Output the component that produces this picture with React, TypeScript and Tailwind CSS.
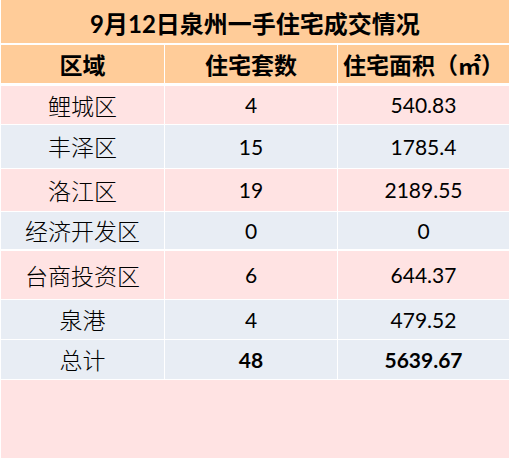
import React from "react";

const PINK = "bg-[#ffe3e3]";
const BLUE = "bg-[#e8edf4]";

type Row = { name: string; count: string; area: string; bg: string; h: string; mt: string; total?: boolean };

const rows: Row[] = [
  { name: "鲤城区", count: "4", area: "540.83", bg: PINK, h: "h-[38px]", mt: "mt-[3px]" },
  { name: "丰泽区", count: "15", area: "1785.4", bg: BLUE, h: "h-[43px]", mt: "mt-px" },
  { name: "洛江区", count: "19", area: "2189.55", bg: PINK, h: "h-[42px]", mt: "mt-px" },
  { name: "经济开发区", count: "0", area: "0", bg: BLUE, h: "h-[37px]", mt: "mt-px" },
  { name: "台商投资区", count: "6", area: "644.37", bg: PINK, h: "h-[48px]", mt: "mt-[2px]" },
  { name: "泉港", count: "4", area: "479.52", bg: BLUE, h: "h-[39px]", mt: "mt-px" },
  { name: "总计", count: "48", area: "5639.67", bg: BLUE, h: "h-[39px]", mt: "mt-px", total: true },
];

const cjk = "font-['Noto_Sans_CJK_SC',sans-serif]";
const num = "font-['Lato','Noto_Sans_CJK_SC',sans-serif]";

export default function App() {
  return (
    <div className="w-[514px] h-[461px] bg-white">
      <div className="ml-px w-[508px] flex flex-col text-black">
        <div className="h-[43px] bg-[#ffcc99] flex items-center justify-center pt-[5px]">
          <span className={`text-[24px] font-bold leading-none ${num}`}>9月12日泉州一手住宅成交情况</span>
        </div>
        <div className="mt-[2px] h-[38px] flex gap-px">
          <div className={`w-[163px] bg-[#ffcc99] flex items-center justify-center text-[23px] font-bold ${cjk}`}>区域</div>
          <div className={`w-[172px] bg-[#ffcc99] flex items-center justify-center text-[23px] font-bold ${cjk}`}>住宅套数</div>
          <div className={`flex-1 bg-[#ffcc99] flex items-center justify-center text-[23px] font-bold ${cjk}`}>住宅面积（㎡）</div>
        </div>
        {rows.map((r) => (
          <div key={r.name} className={`${r.mt} ${r.h} flex gap-px`}>
            <div className={`w-[163px] ${r.bg} flex items-center justify-center text-[23px] font-light ${cjk}`}>{r.name}</div>
            <div className={`w-[172px] ${r.bg} flex items-center justify-center text-[21px] ${r.total ? "font-bold" : ""} ${num}`}>{r.count}</div>
            <div className={`flex-1 ${r.bg} flex items-center justify-center text-[21px] ${r.total ? "font-bold" : ""} ${num}`}>{r.area}</div>
          </div>
        ))}
        <div className={`mt-px h-[78px] ${PINK}`} />
      </div>
    </div>
  );
}
